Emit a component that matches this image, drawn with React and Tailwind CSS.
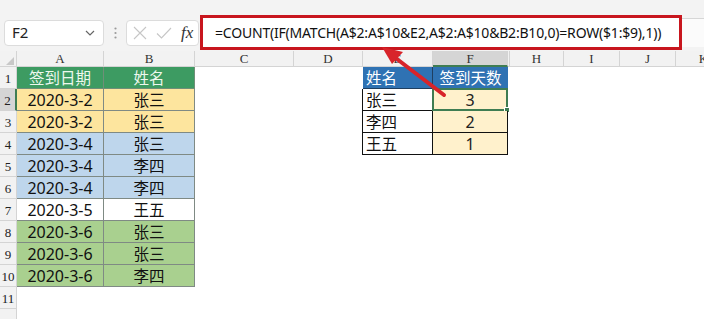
import React from 'react';

const cols = ['', 'A', 'B', 'C', 'D', 'E', 'F', '', 'H', 'I', 'J', 'K'];

const tableA = [
  { d: '2020-3-2', n: '张三', bg: 'bg-[#fde59e]' },
  { d: '2020-3-2', n: '张三', bg: 'bg-[#fde59e]' },
  { d: '2020-3-4', n: '张三', bg: 'bg-[#bed6ec]' },
  { d: '2020-3-4', n: '李四', bg: 'bg-[#bed6ec]' },
  { d: '2020-3-4', n: '李四', bg: 'bg-[#bed6ec]' },
  { d: '2020-3-5', n: '王五', bg: 'bg-white' },
  { d: '2020-3-6', n: '张三', bg: 'bg-[#a9d08f]' },
  { d: '2020-3-6', n: '张三', bg: 'bg-[#a9d08f]' },
  { d: '2020-3-6', n: '李四', bg: 'bg-[#a9d08f]' },
];

const tableE = [
  { n: '张三', c: 3 },
  { n: '李四', c: 2 },
  { n: '王五', c: 1 },
];

const cjk = "font-['Noto_Sans_CJK_SC',sans-serif] text-[15.5px] leading-none";
const num = "font-['Noto_Sans','Noto_Sans_CJK_SC',sans-serif] text-[16px] leading-none";
const serif = "font-['Liberation_Serif','DejaVu_Serif',serif]";

function Toolbar() {
  return (
    <div className="h-[51px] bg-[#f3f3f3] flex items-center pt-[14px] pr-0">
      <div className="ml-[4px] w-[100px] h-[26px] bg-white border border-[#dcdcdc] rounded-[4px] flex items-center justify-between px-[7px]">
        <span className="text-[15px] text-[#222] font-['Noto_Sans',sans-serif]">F2</span>
        <svg width="10" height="6" viewBox="0 0 10 6" className="mr-[1px]">
          <path d="M1 1l4 4 4-4" fill="none" stroke="#666" strokeWidth="1.2" />
        </svg>
      </div>
      <div className="w-[22px] flex justify-center">
        <svg width="3" height="12" viewBox="0 0 3 12">
          <circle cx="1.5" cy="1.5" r="1.1" fill="#9a9a9a" />
          <circle cx="1.5" cy="6" r="1.1" fill="#9a9a9a" />
          <circle cx="1.5" cy="10.5" r="1.1" fill="#9a9a9a" />
        </svg>
      </div>
      <div className="w-[73px] h-[26px] bg-white border border-[#dcdcdc] rounded-[4px] flex items-center pl-[6px] gap-[9px]">
        <svg width="14" height="14" viewBox="0 0 14 14">
          <path d="M1 1l12 12M13 1L1 13" stroke="#c6c6c6" strokeWidth="1.1" />
        </svg>
        <svg width="16" height="12" viewBox="0 0 16 12">
          <path d="M1 6.5l4.5 4.5L15 1" fill="none" stroke="#c6c6c6" strokeWidth="1.1" />
        </svg>
        <span className={`${serif} italic text-[17px] leading-none text-[#333]`}>fx</span>
      </div>
      <div className="flex-1 flex items-center ml-[1px]">
        <div className="w-[482px] h-[35px] border-[3px] border-[#c8161e] bg-white flex items-center pl-[12px] overflow-hidden">
          <span className="text-[14px] text-[#111] font-['Noto_Sans',sans-serif] tracking-[-0.2px] whitespace-nowrap">
            =COUNT(IF(MATCH(A$2:A$10&amp;E2,A$2:A$10&amp;B2:B10,0)=ROW($1:$9),1))
          </span>
        </div>
        <div className="flex-1 h-[29px] bg-[#fbfbfb] border-t border-[#d6d6d6]" />
      </div>
    </div>
  );
}

function Header() {
  return cols.map((c, i) => (
    <div
      key={'h' + i}
      className={`h-[16px] border-r border-[#d4d4d4] flex items-center justify-center text-[13px] leading-none ${serif} text-[#333] ${
        i === 6 ? 'bg-[#d5d5d5] border-b-2 border-b-[#3f7d52]' : 'bg-[#f2f2f2] border-b border-b-[#d4d4d4]'
      }`}
    >
      {i === 0 ? (
        <svg width="8" height="8" viewBox="0 0 8 8" className="self-end ml-auto mr-[2px] mb-[1px]">
          <path d="M8 0V8H0Z" fill="#c8c8c8" />
        </svg>
      ) : (
        c
      )}
    </div>
  ));
}

function RowNum({ n }) {
  const sel = n === 2;
  return (
    <div
      className={`flex items-end justify-center pb-[3px] text-[13px] leading-none ${serif} text-[#222] border-b border-[#d4d4d4] ${
        sel ? 'bg-[#d5d5d5] border-r-2 border-r-[#3f7d52]' : 'bg-[#f2f2f2] border-r border-r-[#d4d4d4]'
      }`}
    >
      {n <= 11 ? n : ''}
    </div>
  );
}

function Row({ r }) {
  const cells = [<RowNum key="n" n={r} />];
  if (r === 1) {
    cells.push(
      <div key="a" className={`bg-[#3d9b62] border-r border-b border-[#6f8f78] flex items-center justify-center text-[#eef8ee] ${cjk}`}>签到日期</div>,
      <div key="b" className={`bg-[#3d9b62] border-r border-b border-[#6f8f78] flex items-center justify-center text-[#eef8ee] ${cjk}`}>姓名</div>
    );
  } else if (r <= 10) {
    const d = tableA[r - 2];
    cells.push(
      <div key="a" className={`${d.bg} border-r border-b border-[#7f8a84] flex items-center justify-center text-[#111] ${num}`}>{d.d}</div>,
      <div key="b" className={`${d.bg} border-r border-b border-[#7f8a84] flex items-center justify-center text-[#111] ${cjk}`}>{d.n}</div>
    );
  } else {
    cells.push(<div key="a" className="bg-white" />, <div key="b" className="bg-white" />);
  }
  cells.push(<div key="c" className="bg-white" />, <div key="d" className="bg-white" />);
  if (r === 1) {
    cells.push(
      <div key="e" className={`bg-[#2f72b3] border-r border-b border-[#1f3f60] flex items-center pl-[3px] text-white ${cjk}`}>姓名</div>,
      <div key="f" className={`bg-[#2f72b3] border-b border-[#1f3f60] flex items-center justify-center text-white ${cjk}`}>签到天数</div>
    );
  } else if (r <= 4) {
    const d = tableE[r - 2];
    cells.push(
      <div key="e" className={`bg-white border-l border-r border-b border-[#111] -ml-[1px] flex items-center pl-[3px] text-[#111] ${cjk}`}>{d.n}</div>,
      <div key="f" className={`relative bg-[#fff1cc] border-r border-b border-[#111] flex items-center justify-center text-[#222] ${num}`}>
        {d.c}
        {r === 2 && (
          <>
            <div className="absolute -left-[1px] -top-[1px] -right-[1px] -bottom-[1px] border-2 border-[#3f7d52]" />
            <div className="absolute -right-[3px] -bottom-[3px] w-[6px] h-[6px] bg-[#3f7d52] border border-white" />
          </>
        )}
      </div>
    );
  } else {
    cells.push(<div key="e" className="bg-white" />, <div key="f" className="bg-white" />);
  }
  cells.push(
    <div key="g" className="bg-white" />,
    <div key="h" className="bg-white" />,
    <div key="i" className="bg-white" />,
    <div key="j" className="bg-white" />,
    <div key="k" className="bg-white" />
  );
  return cells;
}

function Arrow() {
  return (
    <svg className="absolute left-0 top-0 pointer-events-none" width="704" height="319" viewBox="0 0 704 319">
      <line x1="444" y1="95" x2="393" y2="56" stroke="#d8242a" strokeWidth="4" strokeLinecap="round" />
      <path d="M382 47 L403 52 L392 64 Z" fill="#d8242a" />
    </svg>
  );
}

export default function App() {
  const rows = Array.from({ length: 12 }, (_, i) => i + 1);
  return (
    <div className="relative w-[704px] h-[319px] overflow-hidden bg-white">
      <Toolbar />
      <div className="grid grid-cols-[17px_87px_91px_99px_69px_70px_75px_2px_54px_56px_56px_56px] grid-rows-[16px_repeat(12,22px)]">
        <Header />
        {rows.map((r) => (
          <Row key={r} r={r} />
        ))}
      </div>
      <Arrow />
    </div>
  );
}
